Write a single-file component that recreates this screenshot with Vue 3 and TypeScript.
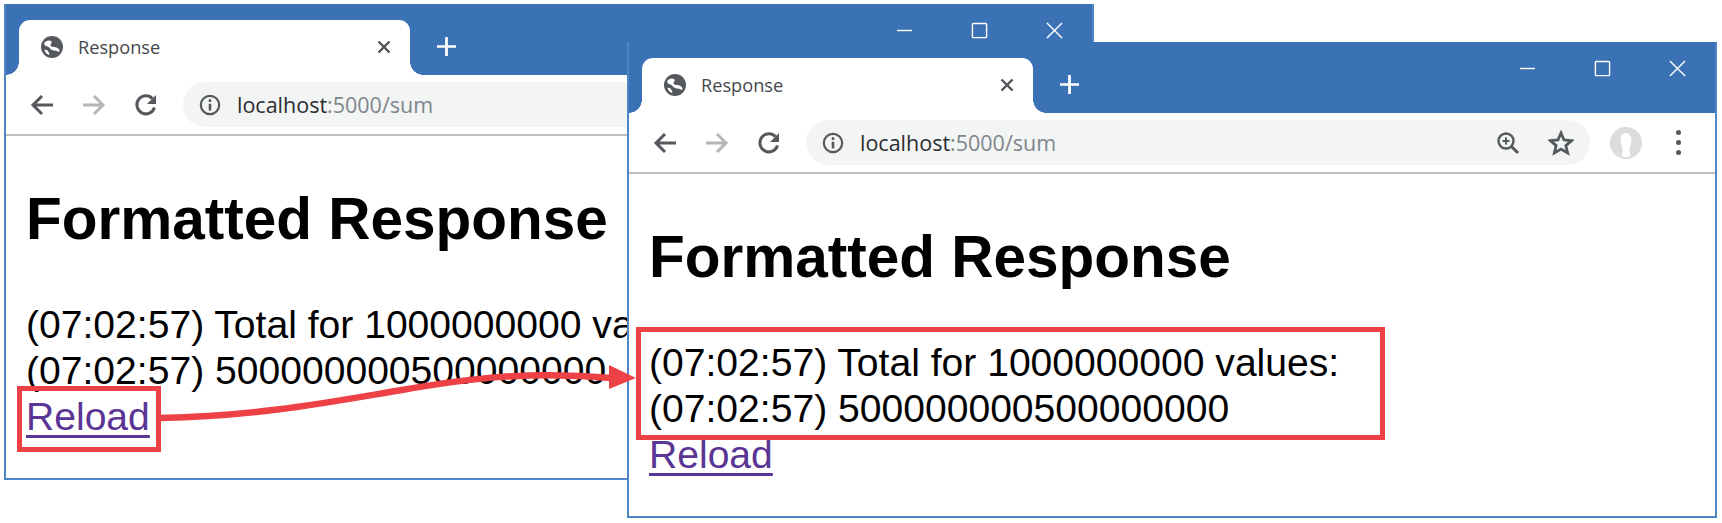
<script setup lang="ts">
interface BrowserWindow {
  id: string
  lines: string[]
}

const windows: BrowserWindow[] = [
  { id: 'back', lines: ['(07:02:57) Total for 1000000000 values:', '(07:02:57) 500000000500000000'] },
  { id: 'front', lines: ['(07:02:57) Total for 1000000000 values:', '(07:02:57) 500000000500000000'] }
]
</script>

<template>
  <div class="desktop">
    <div v-for="win in windows" :key="win.id" class="window" :class="win.id">
      <div class="tabbar">
        <div class="tab">
          <svg class="globe" viewBox="0 0 24 24">
            <circle cx="12" cy="12" r="11" fill="#55585c" />
            <path fill="#fff" d="M4 8.500C5.500 5.500 10 4.500 11.500 6.500C12.500 8 10 9 10.500 10.500C11.200 12.500 15 11.500 17.500 13C19.500 14.200 20 15.500 19 17C17.500 15.500 14.500 16 12 15C9.500 14 9.500 12 7.500 11.500C6 11.200 4.500 10.500 4 8.500z" />
            <path fill="#fff" d="M4.500 15C6 14.500 7.500 15.500 8.500 17C9.500 18.500 9.500 19.500 9 20C7 19.500 5.200 17.500 4.500 15z" />
          </svg>
          <span class="tab-title">Response</span>
          <svg class="tab-close" viewBox="0 0 14 14">
            <path d="M1.500 1.500l11 11M12.500 1.500l-11 11" stroke="#505358" stroke-width="2.400" fill="none" />
          </svg>
        </div>
        <svg class="new-tab" viewBox="0 0 18 18">
          <path d="M9 0v18M0 9h18" stroke="#fff" stroke-width="2.600" fill="none" />
        </svg>
        <div class="controls">
          <svg viewBox="0 0 18 18"><path d="M1 9h16" stroke="#fff" stroke-width="1.500" /></svg>
          <svg viewBox="0 0 18 18"><rect x="1.500" y="1.500" width="15" height="15" rx="1" stroke="#fff" stroke-width="1.500" fill="none" /></svg>
          <svg viewBox="0 0 18 18"><path d="M1 1l16 16M17 1L1 17" stroke="#fff" stroke-width="1.500" fill="none" /></svg>
        </div>
      </div>

      <div class="toolbar">
        <div class="nav">
          <svg viewBox="0 0 24 24"><path d="M23 12H3M12 3l-9 9 9 9" stroke="#55585c" stroke-width="3" fill="none" /></svg>
          <svg viewBox="0 0 24 24"><path d="M1 12h20M12 3l9 9-9 9" stroke="#b4b6b8" stroke-width="3" fill="none" /></svg>
          <svg viewBox="0 0 24 24"><path d="M20.500 14.500A9 9 0 1 1 18.400 5.600" stroke="#55585c" stroke-width="3" fill="none" /><path d="M22 2v9h-9z" fill="#55585c" /></svg>
        </div>
        <div class="omnibox">
          <svg class="info" viewBox="0 0 24 24">
            <circle cx="12" cy="12" r="10" stroke="#55585c" stroke-width="2.400" fill="none" />
            <path d="M10.600 10.500h2.800V18h-2.800zM10.600 5.800h2.800v2.800h-2.800z" fill="#55585c" />
          </svg>
          <span class="url"><span class="host">localhost</span>:5000/sum</span>
          <svg class="zoom-icon" viewBox="0 0 24 24">
            <circle cx="10" cy="10" r="7.500" stroke="#55585c" stroke-width="2.400" fill="none" />
            <path d="M15.500 15.500L22 22" stroke="#55585c" stroke-width="3" />
            <path d="M10 6.500v7M6.500 10h7" stroke="#55585c" stroke-width="2" />
          </svg>
          <svg class="star" viewBox="0 0 24 24">
            <path d="M12 2.800l2.800 6.400 7 .6-5.300 4.600 1.600 6.800-6.100-3.600-6.100 3.600 1.600-6.800L2.200 9.800l7-.6z" stroke="#55585c" stroke-width="2.600" fill="none" />
          </svg>
        </div>
        <div class="avatar">
          <svg viewBox="0 0 32 32">
            <circle cx="16" cy="16" r="16" fill="#dcdcdc" />
            <path d="M16 6c-3.500 0-5.500 3-5.500 7 0 4 1.500 6 2 8 .4 2-.5 5-1 8 1.500.8 3 1 4.500 1s3-.2 4.500-1c-.5-3-1.400-6-1-8 .5-2 2-4 2-8 0-4-2-7-5.500-7z" fill="#fff" />
          </svg>
        </div>
        <div class="menu"><i></i><i></i><i></i></div>
      </div>

      <div class="page">
        <h1>Formatted Response</h1>
        <div class="output">
          <div v-for="line in win.lines" :key="line" class="line">{{ line }}</div>
        </div>
        <a class="reload" href="#">Reload</a>
      </div>
    </div>

    <div class="callout callout-reload"></div>
    <div class="callout callout-output"></div>
    <svg class="arrow" viewBox="0 0 1722 523">
      <path d="M160 418C260 416 330 402 402 390C470 378 530 371 612 378" stroke="#ee4145" stroke-width="6.500" fill="none" />
      <path d="M609 365L636 378L609 389z" fill="#ee4145" />
    </svg>
  </div>
</template>

<style>
html,
body {
  margin: 0;
  background: #fff;
}
</style>

<style scoped>
.desktop {
  position: relative;
  width: 1722px;
  height: 523px;
  overflow: hidden;
  background: #fff;
  font-family: "Liberation Sans", Arial, sans-serif;
}

/* the two browser windows sit freely on the canvas, same size */
.window {
  position: absolute;
  width: 1090px;
  height: 476px;
  box-sizing: border-box;
  border: 2px solid #4f86c6;
  border-top: 0;
  background: #fff;
  display: flex;
  flex-direction: column;
}

.back {
  left: 4px;
  top: 4px;
}

.front {
  left: 627px;
  top: 42px;
}

.tabbar {
  height: 71px;
  flex: none;
  background: #3b71b5;
  display: flex;
  align-items: flex-start;
  padding-left: 13px;
  padding-top: 16px;
  box-sizing: border-box;
}

.tab {
  position: relative;
  width: 391px;
  height: 55px;
  background: #fff;
  border-radius: 11px 11px 0 0;
  display: flex;
  align-items: center;
  padding: 0 19px 2px 21px;
  box-sizing: border-box;
}

.tab::before,
.tab::after {
  content: "";
  position: absolute;
  bottom: 0;
  width: 13px;
  height: 13px;
}

.tab::before {
  left: -13px;
  background: radial-gradient(circle at 0 0, #3b71b5 12.500px, #fff 13px);
}

.tab::after {
  right: -13px;
  background: radial-gradient(circle at 100% 0, #3b71b5 12.500px, #fff 13px);
}

.globe {
  width: 24px;
  height: 24px;
  flex: none;
}

.tab-title {
  margin-left: 14px;
  font-family: "Open Sans", "Noto Sans", sans-serif;
  font-size: 18.200px;
  color: #45474b;
  flex: 1;
}

.tab-close {
  width: 14px;
  height: 14px;
}

.new-tab {
  width: 19px;
  height: 19px;
  margin: 17px 0 0 27px;
}

.controls {
  margin-left: auto;
  margin-top: 2px;
  padding-right: 29px;
  display: flex;
  gap: 58px;
}

.controls svg {
  width: 17px;
  height: 17px;
}

.toolbar {
  height: 59px;
  flex: none;
  border-bottom: 2px solid #bcbec0;
  box-sizing: content-box;
  display: flex;
  align-items: center;
  padding-left: 24px;
}

.nav {
  display: flex;
  gap: 28px;
  width: 153px;
}

.nav svg {
  width: 24px;
  height: 24px;
}

.omnibox {
  width: 784px;
  height: 45px;
  border-radius: 23px;
  background: #f3f4f4;
  display: flex;
  align-items: center;
  padding-left: 16px;
  padding-right: 16px;
  box-sizing: border-box;
}

.info {
  width: 22px;
  height: 22px;
  flex: none;
}

.url {
  margin-left: 16px;
  font-family: "Open Sans", "Noto Sans", sans-serif;
  font-size: 21.500px;
  color: #80868b;
  flex: 1;
}

.host {
  color: #2b2d30;
}

.zoom-icon {
  width: 24px;
  height: 24px;
}

.star {
  width: 26px;
  height: 26px;
  margin-left: 28px;
}

.avatar {
  width: 32px;
  height: 32px;
  margin-left: 20px;
}

.avatar svg {
  width: 32px;
  height: 32px;
  display: block;
}

.menu {
  display: flex;
  flex-direction: column;
  gap: 5px;
  margin-left: 34px;
}

.menu i {
  width: 5px;
  height: 5px;
  border-radius: 50%;
  background: #55585c;
}

.page {
  flex: 1;
  padding: 51px 0 0 20px;
  color: #000;
}

h1 {
  margin: 0;
  font-size: 58.500px;
  line-height: 64px;
  font-weight: 700;
}

.output {
  margin-top: 51px;
  font-size: 39.100px;
  line-height: 46px;
}

.line {
  white-space: nowrap;
}

.reload {
  font-size: 39.100px;
  line-height: 46px;
  color: #5a3596;
  text-decoration-thickness: 3px;
  text-underline-offset: 5px;
}

.callout {
  position: absolute;
  border: 5px solid #ee4145;
  box-sizing: border-box;
}

.callout-reload {
  left: 17px;
  top: 386px;
  width: 144px;
  height: 66px;
}

.callout-output {
  left: 636px;
  top: 327px;
  width: 749px;
  height: 113px;
}

.arrow {
  position: absolute;
  left: 0;
  top: 0;
  width: 1722px;
  height: 523px;
  pointer-events: none;
}
</style>
